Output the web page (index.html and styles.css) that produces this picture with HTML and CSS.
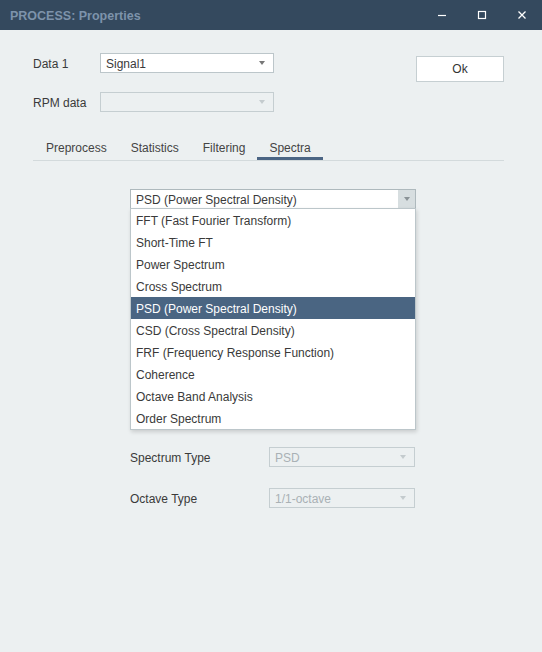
FILE: index.html
```html
<!DOCTYPE html>
<html lang="en">
<head>
    <meta charset="UTF-8">
    <title>PROCESS: Properties</title>
    <link rel="stylesheet" href="styles.css">
</head>
<body>
    <div class="window">
        <div class="titlebar">
            <span class="title">PROCESS: Properties</span>
            <div class="controls">
                <span class="ctl">
                    <svg width="10" height="10" viewBox="0 0 10 10"><path d="M1 5.5h8" stroke="#fff" stroke-width="1.2"/></svg>
                </span>
                <span class="ctl">
                    <svg width="10" height="10" viewBox="0 0 10 10"><rect x="1.5" y="1.5" width="7" height="7" fill="none" stroke="#fff" stroke-width="1.2"/></svg>
                </span>
                <span class="ctl">
                    <svg width="10" height="10" viewBox="0 0 10 10"><path d="M1.5 1.5l7 7M8.5 1.5l-7 7" stroke="#fff" stroke-width="1.3"/></svg>
                </span>
            </div>
        </div>

        <div class="content">
            <div class="top">
                <div class="fields">
                    <div class="field">
                        <label>Data 1</label>
                        <div class="combo">
                            <span>Signal1</span>
                            <i class="arrow"></i>
                        </div>
                    </div>
                    <div class="field">
                        <label>RPM data</label>
                        <div class="combo disabled">
                            <span></span>
                            <i class="arrow"></i>
                        </div>
                    </div>
                </div>
                <button class="btn">Ok</button>
            </div>

            <div class="tabs">
                <span class="tab">Preprocess</span>
                <span class="tab">Statistics</span>
                <span class="tab">Filtering</span>
                <span class="tab active">Spectra</span>
            </div>

            <div class="panel">
                <div class="select">
                    <div class="combo open">
                        <span>PSD (Power Spectral Density)</span>
                        <i class="arrow"></i>
                    </div>
                    <ul class="options">
                        <li>FFT (Fast Fourier Transform)</li>
                        <li>Short-Time FT</li>
                        <li>Power Spectrum</li>
                        <li>Cross Spectrum</li>
                        <li class="selected">PSD (Power Spectral Density)</li>
                        <li>CSD (Cross Spectral Density)</li>
                        <li>FRF (Frequency Response Function)</li>
                        <li>Coherence</li>
                        <li>Octave Band Analysis</li>
                        <li>Order Spectrum</li>
                    </ul>
                </div>

                <div class="opts">
                    <div class="field">
                        <label>Spectrum Type</label>
                        <div class="combo disabled">
                            <span>PSD</span>
                            <i class="arrow"></i>
                        </div>
                    </div>
                    <div class="field">
                        <label>Octave Type</label>
                        <div class="combo disabled">
                            <span>1/1-octave</span>
                            <i class="arrow"></i>
                        </div>
                    </div>
                </div>
            </div>
        </div>
    </div>
</body>
</html>
```

FILE: styles.css
```css
body {
    margin: 0;
    font-family: 'Liberation Sans', Arial, sans-serif;
    font-size: 12px;
    color: #3a3a3a;
}

.window {
    width: 542px;
    height: 652px;
    background: #ecf0f1;
    overflow: hidden;
}

.titlebar {
    height: 30px;
    background: #34495e;
    display: flex;
    align-items: center;
    justify-content: space-between;
    padding-left: 10px;
}

.title {
    color: #7d93ab;
    font-weight: bold;
    font-size: 12.5px;
    padding-top: 1px;
}

.controls {
    display: flex;
    height: 100%;
}

.ctl {
    width: 40px;
    display: flex;
    align-items: center;
    justify-content: center;
}

.content {
    padding: 23px 38px 0 33px;
}

/* data selection + ok */
.top {
    display: flex;
    justify-content: space-between;
    align-items: flex-start;
}

.fields {
    display: flex;
    flex-direction: column;
    gap: 19px;
}

.field {
    display: flex;
    align-items: center;
}

.field label {
    padding-top: 2px;
}

.fields label {
    width: 67px;
}

.combo {
    position: relative;
    width: 174px;
    height: 20px;
    box-sizing: border-box;
    border: 1px solid #bcc6ca;
    background: #fff;
    display: flex;
    align-items: center;
    padding: 1px 0 0 5px;
}

.combo .arrow {
    position: absolute;
    right: 4px;
    top: 0;
    bottom: 0;
    width: 14px;
    display: flex;
    align-items: center;
    justify-content: center;
}

.combo .arrow::after {
    content: "";
    border-left: 3.5px solid transparent;
    border-right: 3.5px solid transparent;
    border-top: 4px solid #777;
}

.combo.disabled {
    background: #ecf0f1;
    border-color: #c5ced1;
    color: #a9b1b5;
}

.combo.disabled .arrow::after {
    border-top-color: #c4cbce;
}

.btn {
    width: 88px;
    height: 26px;
    margin-top: 3px;
    padding-top: 1px;
    border: 1px solid #c6cfd2;
    background: #fff;
    font: inherit;
    color: #333;
}

/* tabs */
.tabs {
    display: flex;
    margin-top: 24px;
    padding-left: 1px;
    border-bottom: 1px solid #d3dadc;
}

.tab {
    padding: 0 12px;
    height: 24px;
    line-height: 24px;
    color: #444;
    box-sizing: border-box;
}

.tab.active {
    border-bottom: 3px solid #4b6584;
    margin-bottom: -1px;
}

/* spectra page */
.panel {
    padding: 28px 0 0 97px;
}

.select {
    position: relative;
    width: 286px;
}

.combo.open {
    width: 286px;
    border-color: #aeb9bd;
}

.combo.open .arrow {
    right: 0;
    width: 17px;
    background: #d7dee0;
}

.combo.open .arrow::after {
    border-top-color: #8a9296;
}

.options {
    position: absolute;
    top: 19px;
    left: 0;
    width: 286px;
    box-sizing: border-box;
    margin: 0;
    padding: 0;
    list-style: none;
    background: #fff;
    border: 1px solid #bcc6ca;
    box-shadow: 1px 2px 4px rgba(0, 0, 0, 0.15);
    z-index: 2;
}

.options li {
    height: 22px;
    line-height: 24px;
    padding-left: 5px;
}

.options li.selected {
    background: #4a6582;
    color: #fff;
}

.opts {
    margin-top: 238px;
    display: flex;
    flex-direction: column;
    gap: 21px;
}

.opts label {
    width: 139px;
}

.opts .combo {
    width: 146px;
}
```
